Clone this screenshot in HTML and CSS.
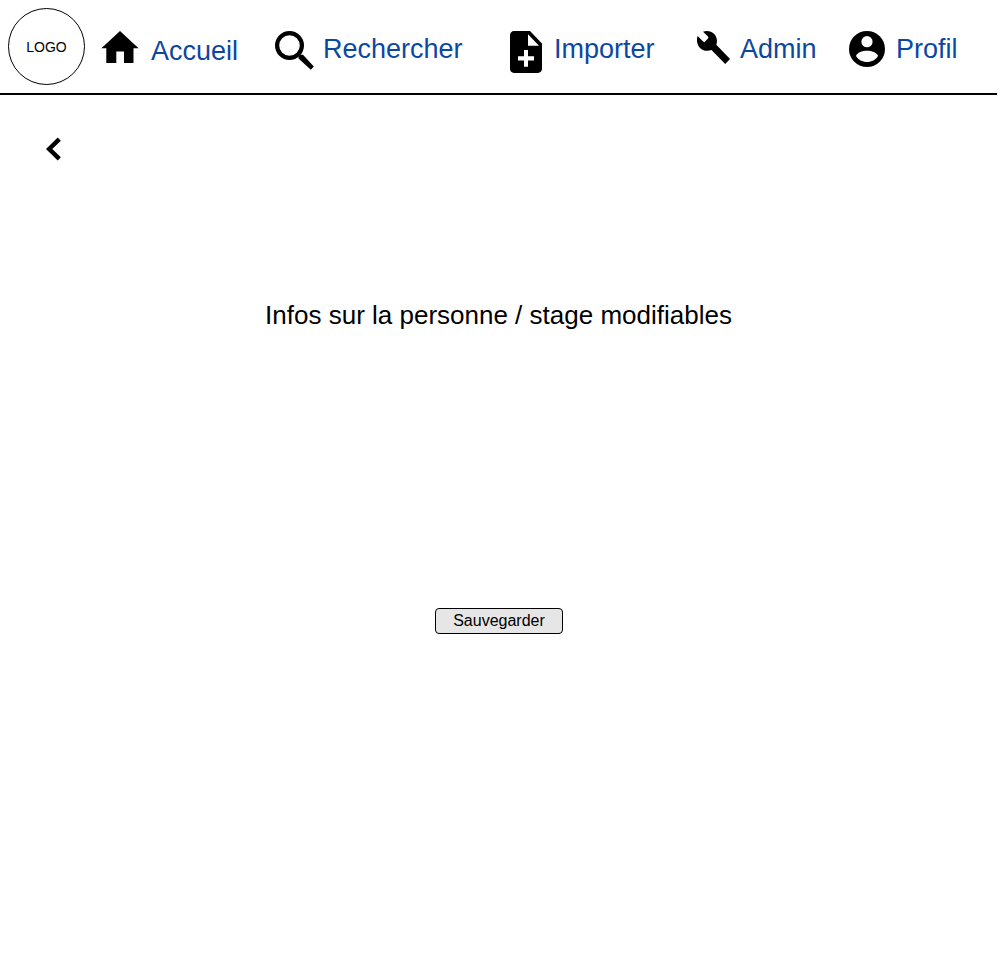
FILE: index.html
```html
<!DOCTYPE html>
<html lang="fr">
<head>
<meta charset="utf-8">
<title>Modifier</title>
<link rel="stylesheet" href="styles.css">
</head>
<body>
<header class="header">
  <div class="logo">LOGO</div>
  <nav class="nav">
    <a class="link home" href="#"><svg width="38" height="32" viewBox="0 0 38 32"><path d="M19 0 .4 17.200H5.300V32H15.300V20.500H23V32H32.500V17.200H37.600z"/></svg><span>Accueil</span></a>
    <a class="link search" href="#"><svg width="39" height="39" viewBox="0 0 39 39"><circle cx="14.500" cy="14.500" r="12.400" fill="none" stroke="#000" stroke-width="4.200"/><path d="M23.500 27.500V25L25.500 23.800H28L38.800 35.500 35.800 38.800z"/></svg><span>Rechercher</span></a>
    <a class="link import" href="#"><svg width="32" height="42" viewBox="4 2 16 20" preserveAspectRatio="none"><path d="M14 2H6c-1.1 0-1.99.9-1.99 2L4 20c0 1.1.89 2 1.99 2H18c1.1 0 2-.9 2-2V8zm2 14h-3v3h-2v-3H8v-2h3v-3h2v3h3zm-3-7V3.5L18.5 9z"/></svg><span>Importer</span></a>
    <a class="link admin" href="#"><svg width="33" height="33" viewBox="0 0 33 33"><path d="M.6 5 5.900 10.300 7.300 11.200 11.500 7 10.800 5.300 6 .8C10-.7 14.500.2 17.200 3 20 5.900 20.600 10 19.300 13.700L33 28 28.200 33 14.500 19C10.500 20.600 6 19.800 3 16.900 0 13.700-.8 9 .6 5z"/></svg><span>Admin</span></a>
    <a class="link profile" href="#"><svg width="36" height="36" viewBox="0 0 36 36"><circle cx="18" cy="18" r="18"/><circle class="cutout" cx="18" cy="10.700" r="5.600"/><path class="cutout" d="M7 25C8 21.500 13.500 19.700 18 19.700S28 21.500 29 25C27 28.800 22.500 31 18 31S9 28.800 7 25z"/></svg><span>Profil</span></a>
  </nav>
</header>
<main class="main">
  <a class="back" href="#" aria-label="Retour"><svg width="16" height="24" viewBox="0 0 16 24"><path d="M13.300 2.200 3.200 12l10.100 9.800" fill="none" stroke="#000" stroke-width="4.500"/></svg></a>
  <p class="info">Infos sur la personne / stage modifiables</p>
  <button class="save">Sauvegarder</button>
</main>
</body>
</html>
```
FILE: styles.css
```css
* { box-sizing: border-box; }
body { margin: 0; background: #fff; color: #000; font-family: "Liberation Sans", Arial, sans-serif; }
svg { display: block; flex: none; }
.header { display: flex; width: 997px; height: 95px; padding: 8px 0 0 8px; border-bottom: 2px solid #000; }
.logo { display: flex; align-items: center; justify-content: center; flex: none; width: 77px; height: 77px; border: 1px solid #000; border-radius: 50%; font-size: 14px; }
.nav { display: flex; align-items: flex-start; padding-top: 23px; }
.link { display: flex; align-items: flex-start; flex: none; color: #0d47a1; font-size: 27px; line-height: 31px; text-decoration: none; }
.link svg { fill: #000; }
.link .cutout { fill: #fff; }
.link span { margin-top: 3px; }
.home { width: 174px; margin-left: 16px; gap: 12px; }
.home span { margin-top: 5px; }
.search { width: 235px; gap: 9px; }
.import { width: 187px; gap: 12px; }
.admin { width: 152px; gap: 10px; }
.profile { gap: 11px; }
.main { display: flex; flex-direction: column; align-items: center; width: 997px; padding-top: 42px; }
.back { align-self: flex-start; margin-left: 46px; }
.info { margin: 139px 0 0; font-size: 26px; line-height: 30px; }
.save { width: 128px; height: 26px; margin: 278px 0 0; padding: 0 0 1px 1px; border: 1px solid #000; border-radius: 4px; background: #e6e6e6; color: #000; font: 16px "Liberation Sans", Arial, sans-serif; }
```
